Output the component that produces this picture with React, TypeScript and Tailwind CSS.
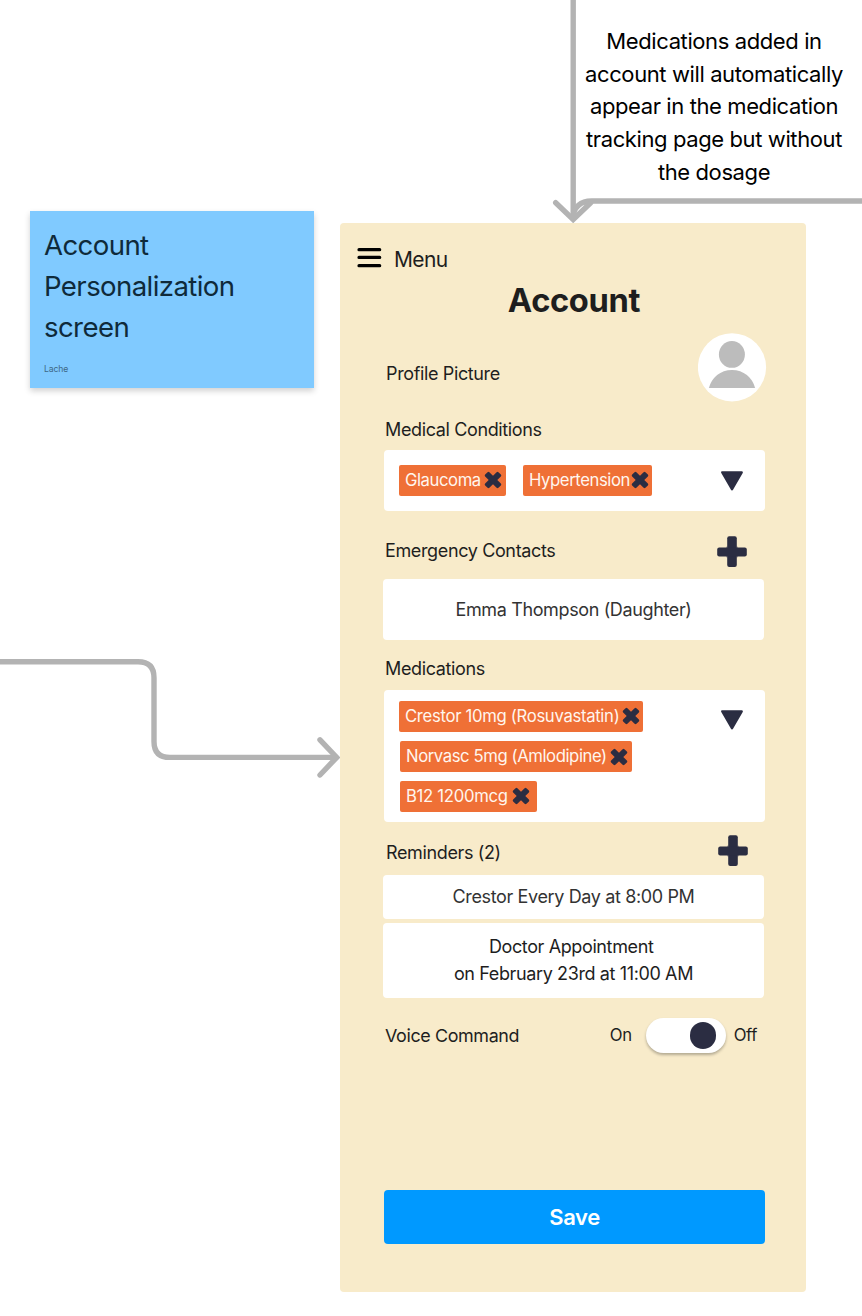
import type { ReactNode } from "react";

function PlusIcon({ className = "" }: { className?: string }) {
  return (
    <svg viewBox="0 0 30 31" className={`h-[31px] w-[30px] shrink-0 ${className}`} fill="#2b2d42" aria-hidden="true">
      <rect x="10.2" y="0.2" width="9.6" height="30.8" rx="2" />
      <rect x="0.2" y="11.4" width="29.6" height="9.2" rx="2" />
      <path d="M9 11.4h1.2V10.2zM19.8 10.2V11.4H21zM9 20.6h1.2v1.2zM19.8 21.8v-1.2H21z" />
    </svg>
  );
}

function CloseIcon() {
  return (
    <svg viewBox="0 0 18 18" className="mb-px size-[18px] shrink-0" fill="#2b2d42" aria-hidden="true">
      <g transform="rotate(45 9 9)">
        <rect x="6" y="-0.4" width="6" height="18.8" rx="1.3" />
        <rect x="-0.4" y="6" width="18.8" height="6" rx="1.3" />
      </g>
    </svg>
  );
}

function TriangleIcon() {
  return (
    <svg viewBox="0 0 22 20" className="h-5 w-[22px] shrink-0" fill="#2b2d42" stroke="#2b2d42" strokeWidth="2.4" strokeLinejoin="round" aria-hidden="true">
      <path d="M1.3 1.4H20.7L11 18.2z" />
    </svg>
  );
}

function Chip({ children, className }: { children: ReactNode; className: string }) {
  return (
    <span className={`flex h-[31px] items-center justify-between whitespace-nowrap rounded-[2px] bg-[#ef7036] pl-1.5 text-[16.7px] text-[#fff6ee] ${className}`}>
      {children}
      <CloseIcon />
    </span>
  );
}

function Connectors() {
  return (
    <svg className="absolute inset-0" width="862" height="1316" fill="none" stroke="#b3b3b3" strokeWidth="5.4" strokeLinecap="round" aria-hidden="true">
      <path d="M573.2 -4V218" />
      <path d="M866 201H591.5C581 201 573.2 207 573.2 218" />
      <path d="M555.7 202.7L573.2 219.4L590.7 202.7" />
      <path d="M-4 661.7H138Q154 661.7 154 677.7V741.4Q154 757.4 170 757.4H336" />
      <path d="M320 739.8L336.7 757.4L320 775" />
    </svg>
  );
}

export default function App() {
  return (
    <div className="relative h-[1316px] w-[862px] overflow-hidden bg-white font-['Inter',sans-serif] tracking-[-0.023em]">
      <Connectors />

      <p className="absolute left-[574px] top-[25px] w-[280px] text-center text-[22px] leading-[32.7px] tracking-[-0.018em] text-black">
        Medications added in
        <br />
        account will automatically
        <br />
        appear in the medication
        <br />
        tracking page but without
        <br />
        the dosage
      </p>

      <aside className="absolute left-[30px] top-[211px] h-[177px] w-[284px] bg-[#80caff] pl-3.5 pt-3.5 shadow-[0_3px_6px_rgba(0,0,0,0.18)]">
        <h2 className="text-[27.6px] leading-[40.8px] tracking-[-0.022em] text-[#0f2a3a]">
          Account
          <br />
          Personalization
          <br />
          screen
        </h2>
        <p className="mt-4 text-[8.6px] leading-[13px] tracking-[-0.015em] text-[#3e6785]">Lache</p>
      </aside>

      <main className="absolute left-[340px] top-[223px] flex h-[1069px] w-[466px] flex-col rounded-[4px] bg-[#f8ebca] pl-11 pr-[41px] pt-5 text-[18px] text-[#1e1e1e]">
        <div className="-ml-[27px] flex h-8 items-center">
          <svg viewBox="0 0 25 20" className="mb-0.5 h-5 w-[25px]" stroke="#000" strokeWidth="3.2" strokeLinecap="round" aria-hidden="true">
            <path d="M2 1.7H22.7M2 9.4H22.7M2 17.7H22.7" />
          </svg>
          <span className="ml-3 pt-0.5 text-[21px] tracking-[-0.03em]">Menu</span>
        </div>
        <h1 className="-mt-px mb-px pr-px text-center text-[32.7px] font-bold leading-[52px]">Account</h1>

        <div className="mt-1.5 flex h-[69px] items-center justify-between">
          <span className="pl-0.5 pt-[11px]">Profile Picture</span>
          <svg viewBox="0 0 69 69" className="-mr-0.5 size-[69px]" aria-hidden="true">
            <circle cx="34" cy="34.3" r="34.1" fill="#fff" />
            <ellipse cx="33.9" cy="21.4" rx="13" ry="13.4" fill="#bcbcbc" />
            <path d="M10.9 55C13.5 44.5 22.5 37 34 37S54.5 44.5 57.1 55z" fill="#bcbcbc" />
          </svg>
        </div>

        <div className="flex h-12 items-center pl-px pt-1.5">Medical Conditions</div>
        <div className="flex h-[61px] items-center rounded-[4px] bg-white pl-[15px] pr-[22px]">
          <Chip className="w-[107px] pr-1 tracking-[-0.026em]">Glaucoma</Chip>
          <Chip className="ml-[17px] w-[129px] pr-[3px] tracking-[-0.025em]">Hypertension</Chip>
          <span className="ml-auto">
            <TriangleIcon />
          </span>
        </div>

        <div className="flex h-[68px] items-center justify-between pl-px pr-[18px] pt-3">
          <span className="-mt-0.5">Emergency Contacts</span>
          <PlusIcon className="mt-px" />
        </div>
        <div className="-ml-px mr-px flex h-[61px] items-center justify-center rounded-[4px] bg-white text-[#333]">
          Emma Thompson (Daughter)
        </div>

        <div className="flex h-[50px] items-center pl-px pt-[7px]">Medications</div>
        <div className="flex h-[132px] items-start justify-between rounded-[4px] bg-white pl-[15px] pr-[22px]">
          <div className="flex flex-col items-start gap-[9px] pt-[11px]">
            <Chip className="w-[244px] pr-[3px] tracking-[-0.019em]">Crestor 10mg (Rosuvastatin)</Chip>
            <Chip className="ml-px w-[232px] pr-1 pt-px tracking-[-0.025em]">Norvasc 5mg (Amlodipine)</Chip>
            <Chip className="ml-px w-[137px] pr-[7px] tracking-[-0.018em]">B12 1200mcg</Chip>
          </div>
          <span className="pt-5">
            <TriangleIcon />
          </span>
        </div>

        <div className="flex h-[53px] items-center justify-between pl-0.5 pr-[17px] pt-[9px]">
          <span className="-mt-0.5">Reminders (2)</span>
          <PlusIcon className="mb-1.5" />
        </div>
        <div className="-ml-px mr-px flex flex-col gap-1 text-center">
          <div className="flex h-[43.5px] items-center justify-center rounded-[4px] bg-white text-[#333]">
            Crestor Every Day at 8:00 PM
          </div>
          <div className="flex h-[75px] items-center justify-center rounded-[4px] bg-white pt-px leading-[26.6px] tracking-[-0.021em]">
            Doctor Appointment&nbsp;
            <br />
            on February 23rd at 11:00 AM
          </div>
        </div>

        <div className="mt-5 flex h-[35px] items-center">
          <span className="pl-px pt-0.5 text-[17.9px]">Voice Command</span>
          <span className="ml-auto pt-px text-[16.7px]">On</span>
          <span className="ml-3.5 flex h-[35px] w-20 items-center justify-end rounded-full bg-white pr-2.5 shadow-[0_2px_3px_rgba(0,0,0,0.28)]">
            <span className="h-[27px] w-[26px] rounded-full bg-[#2b2d42]" />
          </span>
          <span className="ml-2 pr-2 pt-px text-[16.7px]">Off</span>
        </div>

        <button className="mt-[137px] h-[54px] shrink-0 rounded-[4px] bg-[#0099ff] pt-px text-[22px] font-semibold text-white">
          Save
        </button>
      </main>
    </div>
  );
}
